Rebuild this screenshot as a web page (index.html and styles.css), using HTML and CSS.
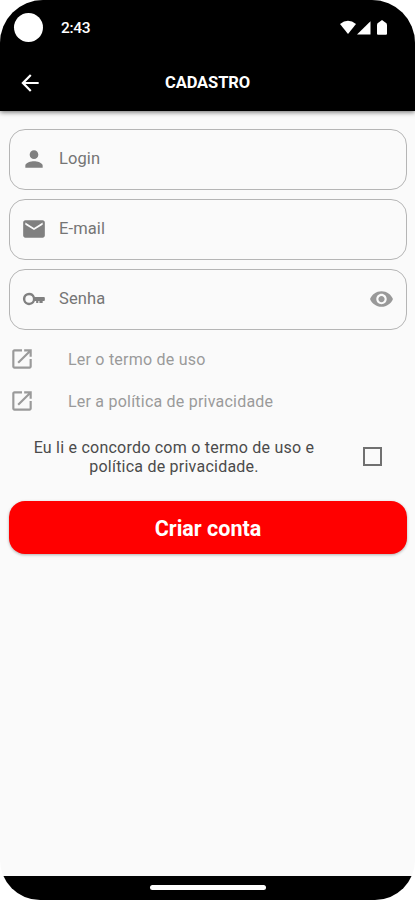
FILE: index.html
```html
<!DOCTYPE html>
<html lang="pt-BR">
<head>
<meta charset="utf-8">
<title>Cadastro</title>
<link rel="stylesheet" href="styles.css">
</head>
<body>
<div class="phone">
  <header class="top">
    <div class="status">
      <span class="camera"></span>
      <span class="time">2:43</span>
      <svg class="signals" width="48" height="16" viewBox="0 0 48 16"><path d="M0 4Q8-2.500 16 4L8 14Z"/><path d="M17 14.600H30.500V1.200Z"/><path d="M37 5Q37 3 39 2.300L42 0L45 2.300Q47 3 47 5V13.700q0 1-1 1H38q-1 0-1-1Z"/></svg>
    </div>
    <div class="appbar">
      <svg class="icon" viewBox="0 0 24 24"><path d="M20 11H7.830l5.590-5.590L12 4l-8 8 8 8 1.410-1.410L7.830 13H20z"/></svg>
      <h1>CADASTRO</h1>
    </div>
  </header>
  <main>
    <label class="field">
      <svg class="icon" viewBox="0 0 24 24"><path d="M12 12c2.210 0 4-1.790 4-4s-1.790-4-4-4-4 1.790-4 4 1.790 4 4 4zm0 2c-2.670 0-8 1.340-8 4v2h16v-2c0-2.660-5.330-4-8-4z"/></svg>
      <span class="label">Login</span>
    </label>
    <label class="field">
      <svg class="icon" viewBox="0 0 24 24"><path d="M20 4H4c-1.100 0-1.990.9-1.990 2L2 18c0 1.100.9 2 2 2h16c1.100 0 2-.9 2-2V6c0-1.100-.9-2-2-2zm0 4l-8 5-8-5V6l8 5 8-5v2z"/></svg>
      <span class="label">E-mail</span>
    </label>
    <label class="field last">
      <svg class="icon" viewBox="0 0 24 24"><path fill-rule="evenodd" d="M7.500 6.300a5.700 5.700 0 1 0 5.350 7.500H14v2h2V13.800h1v2h3V13.800h1.200q.8 0 .8-.8v-2q0-.8-.8-.8H12.850A5.700 5.700 0 0 0 7.500 6.300Zm0 2.200a3.500 3.500 0 1 1 0 7 3.500 3.500 0 0 1 0-7Z"/></svg>
      <span class="label">Senha</span>
      <svg class="icon eye" viewBox="0 0 24 24"><path d="M12 4.500C7 4.500 2.730 7.610 1 12c1.730 4.390 6 7.500 11 7.500s9.270-3.110 11-7.500c-1.730-4.390-6-7.500-11-7.500zM12 17c-2.760 0-5-2.240-5-5s2.240-5 5-5 5 2.240 5 5-2.240 5-5 5zm0-8c-1.660 0-3 1.340-3 3s1.340 3 3 3 3-1.340 3-3-1.340-3-3-3z"/></svg>
    </label>
    <a class="link">
      <svg class="icon" viewBox="0 0 24 24"><path d="M19 19H5V5h7V3H5c-1.110 0-2 .9-2 2v14c0 1.100.89 2 2 2h14c1.100 0 2-.9 2-2v-7h-2v7zM14 3v2h3.590l-9.830 9.830 1.410 1.410L19 6.410V10h2V3h-7z"/></svg>
      <span>Ler o termo de uso</span>
    </a>
    <a class="link">
      <svg class="icon" viewBox="0 0 24 24"><path d="M19 19H5V5h7V3H5c-1.110 0-2 .9-2 2v14c0 1.100.89 2 2 2h14c1.100 0 2-.9 2-2v-7h-2v7zM14 3v2h3.590l-9.830 9.830 1.410 1.410L19 6.410V10h2V3h-7z"/></svg>
      <span>Ler a política de privacidade</span>
    </a>
    <div class="agree">
      <p>Eu li e concordo com o termo de uso e<br>política de privacidade.</p>
      <span class="check"></span>
    </div>
    <button class="submit">Criar conta</button>
  </main>
  <footer><span class="handle"></span></footer>
</div>
</body>
</html>
```
FILE: styles.css
```css
* { box-sizing: border-box; }
body { margin: 0; background: #fff; font-family: Roboto, sans-serif; }
.phone {
  width: 415px;
  height: 900px;
  display: flex;
  flex-direction: column;
  background: #fafafa;
  border-radius: 43px 43px 40px 40px;
  overflow: hidden;
}
.top {
  height: 111px;
  background: #000;
  color: #fff;
  box-shadow: 0 1px 5px rgba(0, 0, 0, .6);
}
.status { height: 54px; display: flex; align-items: center; padding-left: 14px; }
.camera { width: 29px; height: 29px; border-radius: 50%; background: #fff; }
.time { margin: 2px 0 0 18px; font-size: 15.5px; font-weight: 500; letter-spacing: -.3px; }
.signals { margin: 2px 27px 0 auto; fill: #fff; }
.appbar { height: 57px; display: flex; align-items: center; padding-left: 17px; }
.icon { width: 26px; height: 26px; flex: none; fill: currentColor; }
h1 { flex: 1; margin: 0 43px 0 0; text-align: center; font-size: 16.5px; font-weight: 700; letter-spacing: -.1px; }
main { flex: 1; padding: 18px 8px 0 9px; }
.field {
  height: 61px;
  margin-bottom: 9px;
  display: flex;
  align-items: center;
  padding: 0 12px 0 11px;
  border: 1px solid #b5b5b5;
  border-radius: 16px;
  color: #808080;
}
.field.last { margin-bottom: 8px; }
.field .icon { margin-bottom: 1px; }
.label { margin: -3px 0 0 12px; font-size: 16.5px; letter-spacing: .1px; color: #757575; }
.eye { width: 25px; margin-left: auto; color: #999; }
.link { height: 42px; display: flex; align-items: center; font-size: 16px; letter-spacing: .22px; color: #9a9a9a; }
.link span { margin-left: 33px; }
.agree { height: 69px; display: flex; align-items: center; color: #4b4b4b; }
.agree p { width: 330px; margin: 0; text-align: center; font-size: 16px; line-height: 19px; letter-spacing: .23px; }
.check { width: 19px; height: 19px; margin-left: 24px; border: 2px solid #707070; }
.submit {
  display: block;
  width: 100%;
  height: 53px;
  margin-top: 10px;
  padding: 1px 0 0;
  border: 0;
  border-radius: 16px;
  background: #f00;
  color: #fff;
  font: 700 21.5px Roboto, sans-serif;
  box-shadow: 0 1px 3px rgba(0, 0, 0, .3);
}
footer { height: 24px; background: #000; display: flex; justify-content: center; }
.handle { width: 116px; height: 5px; margin-top: 9px; border-radius: 3px; background: #fff; }
```
